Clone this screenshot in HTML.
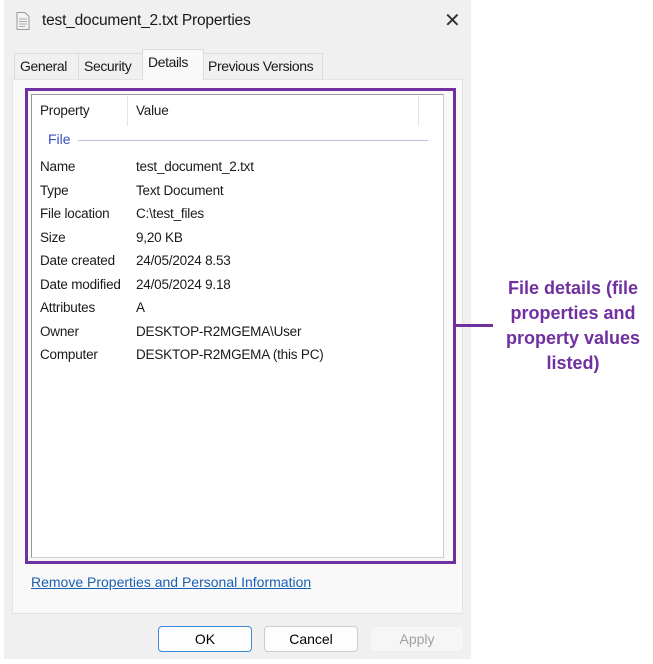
<!DOCTYPE html>
<html><head><style>
body{margin:0;width:653px;height:664px;background:#fff;position:relative;font-family:"Liberation Sans",sans-serif;overflow:hidden}
.win{position:absolute;left:4px;top:0;width:467px;height:659px;background:#f0f0f0}
.abs{position:absolute;white-space:nowrap}
.t{font-size:13.5px;color:#1a1a1a;letter-spacing:-0.2px}
.tab{position:absolute;top:53px;height:25px;background:#f0f0f0;border:1px solid #dcdcdc;border-bottom:none;font-size:14px;letter-spacing:-0.4px;line-height:25px;padding-left:5px;color:#1a1a1a}
.btn{position:absolute;top:626px;height:24px;border:1px solid #ccc;border-radius:4px;background:#fdfdfd;font-size:14px;text-align:center;line-height:24px}
</style></head><body>
<div class="win"></div>
<svg class="abs" style="left:16px;top:12px" width="14" height="18"><path d="M1 .5h8l4 4v13H1z" fill="#f4f4f4" stroke="#999"/><path d="M3 7h8M3 9.5h8M3 12h8M3 14.5h6" stroke="#aaa"/></svg>
<div class="abs" style="left:42px;top:12px;font-size:15.5px;color:#1a1a1a;letter-spacing:-0.2px">test_document_2.txt Properties</div>
<div class="abs" style="left:444px;top:8px;font-size:20px;color:#333">✕</div>
<div style="position:absolute;left:12px;top:79px;width:449px;height:533px;background:#f9f9f9;border:1px solid #e3e3e3"></div>
<div class="tab" style="left:14px;width:58px">General</div>
<div class="tab" style="left:78px;width:58px">Security</div>
<div class="tab" style="left:142px;top:49px;height:30px;width:55px;background:#f9f9f9;z-index:2">Details</div>
<div class="tab" style="left:202px;width:114px">Previous Versions</div>
<div style="position:absolute;left:31px;top:94px;width:411px;height:462px;background:#fff;border:1px solid #999;border-right-color:#ccc;border-bottom-color:#ccc"></div>
<div class="abs" style="left:127px;top:96px;width:1px;height:30px;background:#e5e5e5"></div>
<div class="abs" style="left:418px;top:96px;width:1px;height:30px;background:#e5e5e5"></div>
<div class="abs t" style="left:40px;top:103px">Property</div>
<div class="abs t" style="left:136px;top:103px">Value</div>
<div class="abs" style="left:48px;top:131px;font-size:14px;color:#3a4fc0">File</div>
<div class="abs" style="left:78px;top:140px;width:350px;height:1px;background:#b8c0e8"></div>
<div class="abs t" style="left:40px;top:155px;line-height:23.5px">Name<br>Type<br>File location<br>Size<br>Date created<br>Date modified<br>Attributes<br>Owner<br>Computer</div>
<div class="abs t" style="left:136px;top:155px;line-height:23.5px">test_document_2.txt<br>Text Document<br>C:\test_files<br>9,20 KB<br>24/05/2024 8.53<br>24/05/2024 9.18<br>A<br>DESKTOP-R2MGEMA\User<br>DESKTOP-R2MGEMA (this PC)</div>
<div style="position:absolute;left:25px;top:88px;width:425px;height:470px;border:3px solid #7030a0"></div>
<div class="abs" style="left:455px;top:324px;width:38px;height:3px;background:#7030a0"></div>
<div class="abs" style="left:490px;top:276px;width:166px;text-align:center;font-weight:bold;font-size:18px;line-height:25px;color:#7030a0">File details (file<br>properties and<br>property values<br>listed)</div>
<div class="abs" style="left:31px;top:574px;font-size:14px;letter-spacing:0;color:#1a5fb4;text-decoration:underline">Remove Properties and Personal Information</div>
<div class="btn" style="left:158px;width:92px;border:1px solid #3c8ad8">OK</div>
<div class="btn" style="left:264px;width:92px">Cancel</div>
<div class="btn" style="left:370px;width:92px;color:#a0a0a0;border-color:#eee;background:#f6f6f6">Apply</div>
</body></html>
